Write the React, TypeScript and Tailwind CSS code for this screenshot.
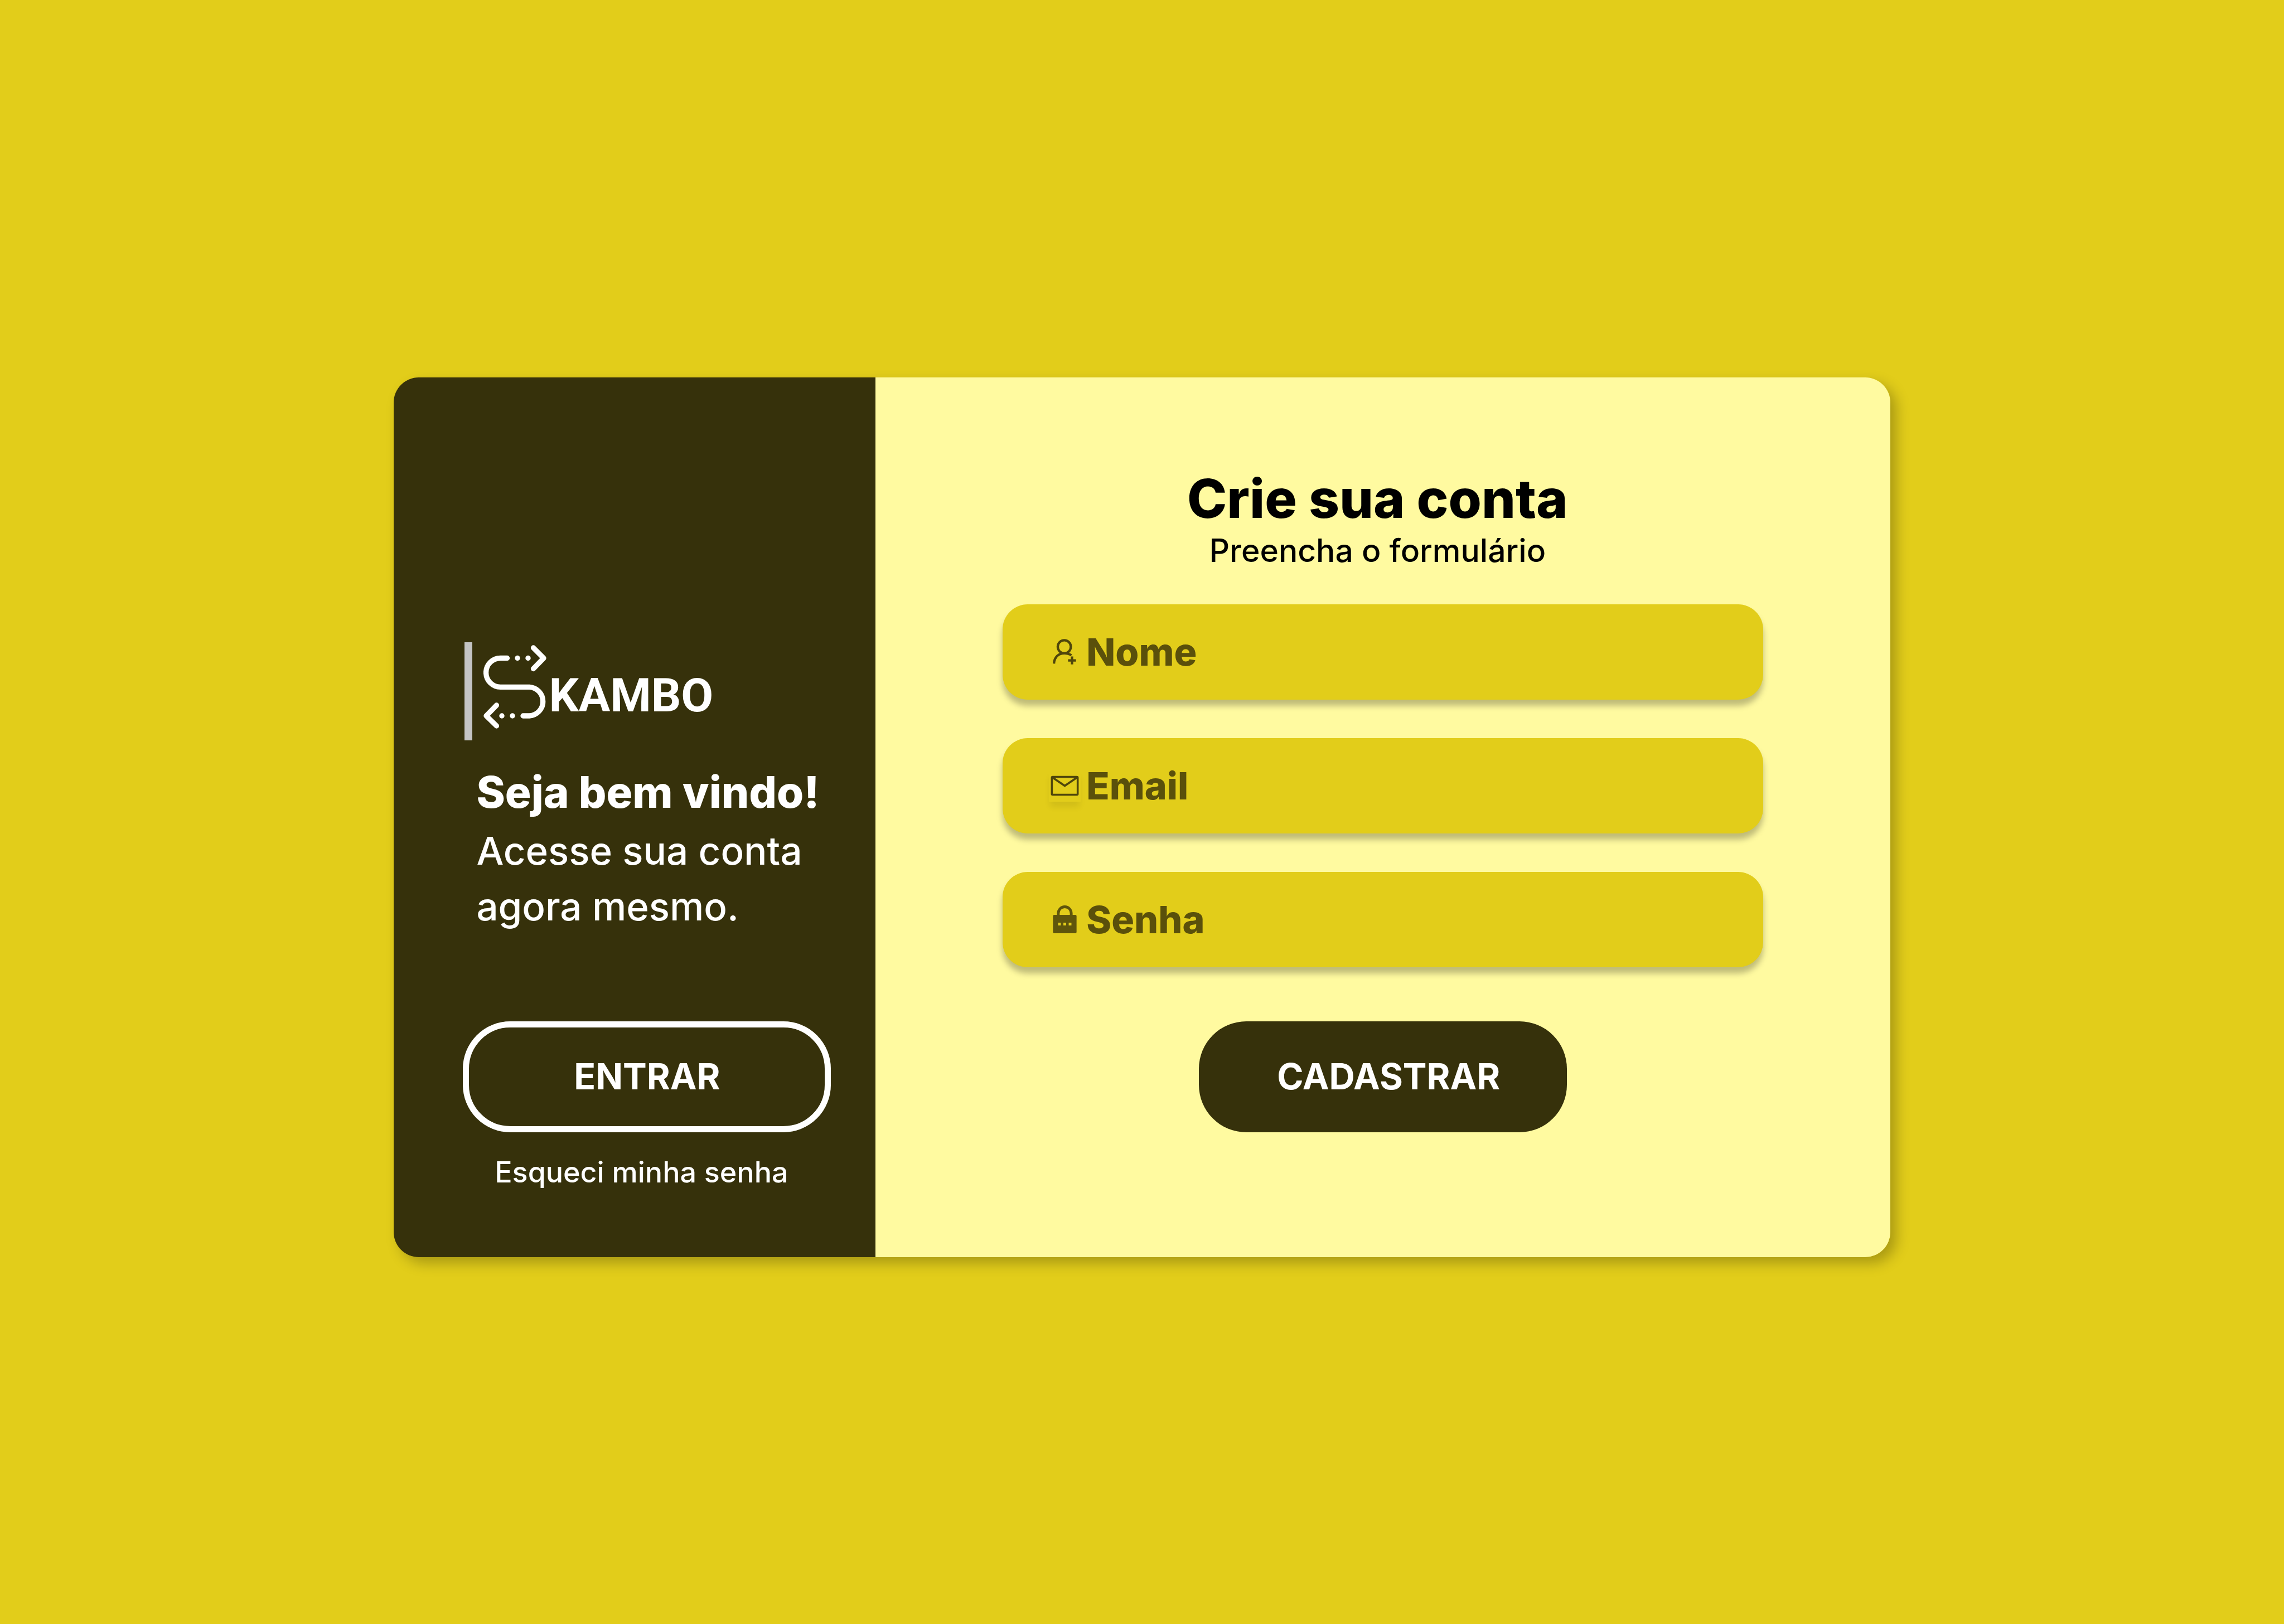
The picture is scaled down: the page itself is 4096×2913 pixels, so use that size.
import type { ReactNode } from "react";

function SwapMark() {
  return (
    <svg viewBox="0 0 113 150" className="h-[150px] w-[113px]" fill="none" stroke="white" strokeWidth="9.300" strokeLinecap="round" strokeLinejoin="round" aria-hidden="true">
      <path d="M42.500 23.500H30.500A25.900 25.900 0 0 0 30.500 75.300H82.400A25.900 25.900 0 0 1 82.400 127H71" />
      <path d="M89.500 5L108 23.500L89.500 42.500" />
      <path d="M23.500 108L5 127L23.500 145" />
      <g fill="white" stroke="none">
        <circle cx="61" cy="23.500" r="4.700" />
        <circle cx="80" cy="23.500" r="4.700" />
        <circle cx="33" cy="127" r="4.700" />
        <circle cx="52" cy="127" r="4.700" />
      </g>
    </svg>
  );
}

function UserPlusIcon() {
  return (
    <svg viewBox="0 0 59 64" className="h-[46px] w-[42px]" fill="none" stroke="#4f460b" strokeWidth="6" aria-hidden="true">
      <circle cx="29" cy="19.500" r="16.500" />
      <path d="M3 62C4 45 15 36 29 36Q39 36 47 41" />
      <path d="M48.500 44V64M38.500 54H58.500" />
    </svg>
  );
}

function MailIcon() {
  return (
    <svg viewBox="0 0 80 80" className="size-[57px] shadow-[0_11px_11px_-2px_rgba(0,0,0,0.08)]" fill="none" stroke="#4f460b" strokeWidth="5" aria-hidden="true">
      <rect width="80" height="80" fill="#e2cd1a" stroke="none" />
      <rect x="7.500" y="17.500" width="65" height="45" rx="2" />
      <path d="M9 19L40 40L71 19" />
    </svg>
  );
}

function LockIcon() {
  return (
    <svg viewBox="0 0 60 71" className="h-[50px] w-[43px]" fill="none" aria-hidden="true">
      <path d="M13.500 26V20a16.500 16.500 0 0 1 33 0V26" stroke="#5f550c" strokeWidth="7" />
      <path fillRule="evenodd" fill="#5f550c" d="M3 24H57Q60 24 60 27V68Q60 71 57 71H3Q0 71 0 68V27Q0 24 3 24ZM13 44V51H20V44ZM26.500 44V51H33.500V44ZM40 44V51H47V44Z" />
    </svg>
  );
}

function Field({ id, label, type, icon }: { id: string; label: string; type: string; icon: ReactNode }) {
  return (
    <div className="flex h-[171px] items-center rounded-[45px] bg-[#e2cd1a] pr-12 pl-[76px] shadow-[0_11px_11px_rgba(0,0,0,0.25)]">
      <label htmlFor={id} aria-label={label} className="mr-1 flex w-[70px] shrink-0 justify-center">
        {icon}
      </label>
      <input
        id={id}
        type={type}
        placeholder={label}
        className="h-full min-w-0 flex-1 bg-transparent text-[68px] font-extrabold text-[#5a500b] outline-none placeholder:text-[#5a500b] placeholder:opacity-100"
      />
    </div>
  );
}

export default function App() {
  return (
    <div className="flex min-h-screen items-center justify-center bg-[#e2cd1a] pt-[18px] font-['Inter',sans-serif]">
      <main className="flex w-[65.55%] overflow-hidden rounded-[45px] shadow-[11px_11px_23px_rgba(0,0,0,0.25)]">
        <aside className="flex w-[32.2%] flex-col bg-[#36310b] px-[4.65%] pt-[475px] pb-[84px] text-white">
          <div className="ml-[3px] flex h-[176px]">
            <div className="w-[14px] shrink-0 bg-[#c4c4c4]" />
            <div className="ml-5 flex pt-[5px]">
              <SwapMark />
              <span className="ml-1 self-end pb-[38px] font-['Roboto',sans-serif] text-[84px] leading-[84px] font-bold">KAMBO</span>
            </div>
          </div>
          <h2 className="mt-[42px] ml-6 text-[78px] leading-[102px] font-extrabold whitespace-nowrap">Seja bem vindo!</h2>
          <p className="mt-1 ml-6 text-[69px] leading-[100px] font-medium whitespace-nowrap">
            Acesse sua conta
            <br />
            agora mesmo.
          </p>
          <button type="button" className="mt-[156px] h-[199px] w-[660px] rounded-[85px] border-[11px] border-white text-[64px] font-bold">
            ENTRAR
          </button>
          <a href="#senha" className="mt-[36px] w-[660px] pr-5 text-center text-[52px] leading-[72px] font-medium whitespace-nowrap">
            Esqueci minha senha
          </a>
        </aside>
        <section className="flex flex-1 flex-col bg-[#fffaa0] px-[8.5%] pt-[155px] pb-[224px]">
          <h1 className="pr-5 text-center text-[96px] leading-[124px] font-extrabold">Crie sua conta</h1>
          <p className="pr-5 text-center text-[57px] leading-[64px] font-medium">Preencha o formulário</p>
          <form className="mt-[64px] flex flex-col gap-[69px]">
            <Field id="nome" label="Nome" type="text" icon={<UserPlusIcon />} />
            <Field id="email" label="Email" type="email" icon={<MailIcon />} />
            <Field id="senha" label="Senha" type="password" icon={<LockIcon />} />
            <button type="submit" className="mt-[28px] h-[199px] w-[660px] self-center rounded-[85px] bg-[#36310b] pl-5 text-[64px] font-bold text-white">
              CADASTRAR
            </button>
          </form>
        </section>
      </main>
    </div>
  );
}
